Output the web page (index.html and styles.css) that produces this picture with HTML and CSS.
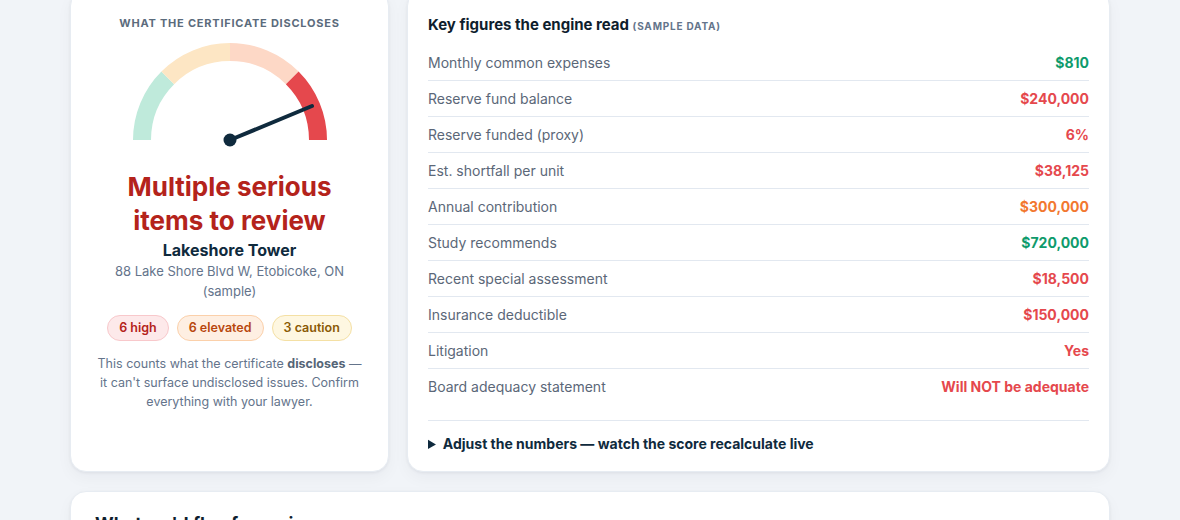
FILE: index.html
```html
<!DOCTYPE html>
<html>
<head>
<title>Status certificate review</title>
<link rel="stylesheet" href="styles.css">
</head>
<body>
<div class="page">
  <div class="summary-grid">
    <div class="card score-card">
      <div class="eyebrow">What the certificate discloses</div>
      <svg class="gauge" width="200" height="105" viewBox="0 0 200 105">
        <path d="M12 97 A88 88 0 0 1 37.77 34.77" stroke="#bfeadb" />
        <path d="M37.77 34.77 A88 88 0 0 1 100 9" stroke="#fde6c4" />
        <path d="M100 9 A88 88 0 0 1 162.23 34.77" stroke="#fdd8c6" />
        <path d="M162.23 34.77 A88 88 0 0 1 188 97" stroke="#e5484d" />
        <line x1="100" y1="97" x2="182" y2="63" class="needle" />
        <circle cx="100" cy="97" r="6.5" fill="#0f2a3d" />
      </svg>
      <div class="verdict">Multiple serious items to review</div>
      <div class="building">Lakeshore Tower</div>
      <div class="address">88 Lake Shore Blvd W, Etobicoke, ON (sample)</div>
      <div class="chips">
        <span class="chip chip-high">6 high</span>
        <span class="chip chip-elevated">6 elevated</span>
        <span class="chip chip-caution">3 caution</span>
      </div>
      <p class="note">This counts what the certificate <b>discloses</b> — it can't surface undisclosed issues. Confirm everything with your lawyer.</p>
    </div>

    <div class="card figures-card">
      <h3 class="figures-title">Key figures the engine read <span class="tag">(sample data)</span></h3>
      <div class="figures">
        <div class="row"><span>Monthly common expenses</span><b class="good">$810</b></div>
        <div class="row"><span>Reserve fund balance</span><b class="bad">$240,000</b></div>
        <div class="row"><span>Reserve funded (proxy)</span><b class="bad">6%</b></div>
        <div class="row"><span>Est. shortfall per unit</span><b class="bad">$38,125</b></div>
        <div class="row"><span>Annual contribution</span><b class="warn">$300,000</b></div>
        <div class="row"><span>Study recommends</span><b class="good">$720,000</b></div>
        <div class="row"><span>Recent special assessment</span><b class="bad">$18,500</b></div>
        <div class="row"><span>Insurance deductible</span><b class="bad">$150,000</b></div>
        <div class="row"><span>Litigation</span><b class="bad">Yes</b></div>
        <div class="row"><span>Board adequacy statement</span><b class="bad">Will NOT be adequate</b></div>
      </div>
      <details class="adjust">
        <summary>Adjust the numbers — watch the score recalculate live</summary>
      </details>
    </div>
  </div>

  <div class="card flags-card">
    <h2>What we'd flag for review</h2>
  </div>
</div>
</body>
</html>
```

FILE: styles.css
```css
body {
  margin: 0;
  font-family: Inter, "Noto Sans", sans-serif;
  background-color: #f1f4f8;
  color: #0f2a3d;
  overflow: hidden;
}
.page {
  width: 1040px;
  margin: -10px auto 0;
  display: flex;
  flex-direction: column;
  gap: 19px;
}
.summary-grid {
  display: grid;
  grid-template-columns: 319px 703px;
  gap: 18px;
}
.card {
  background-color: white;
  border-radius: 16px;
  border: 1px solid #e7ecf2;
  box-shadow: 0 1px 3px rgba(15, 23, 42, 0.06), 0 6px 16px rgba(15, 23, 42, 0.04);
  box-sizing: border-box;
}
.score-card {
  padding: 25px 24px 20px;
  display: flex;
  flex-direction: column;
  align-items: center;
  text-align: center;
}
.eyebrow {
  font-size: 11px;
  line-height: 14px;
  font-weight: 700;
  letter-spacing: 0.07em;
  text-transform: uppercase;
  color: #5b6b7c;
}
.gauge {
  margin-top: 13px;
  display: block;
}
.gauge path {
  fill: none;
  stroke-width: 18;
}
.needle {
  stroke: #0f2a3d;
  stroke-width: 4;
  stroke-linecap: round;
}
.verdict {
  margin-top: 22px;
  width: 230px;
  font-size: 26px;
  line-height: 34px;
  font-weight: 700;
  color: #b4231b;
}
.building {
  margin-top: 2px;
  font-size: 16px;
  line-height: 20px;
  font-weight: 700;
  color: #0f2a3d;
}
.address {
  margin-top: 1px;
  width: 250px;
  font-size: 13px;
  line-height: 20px;
  color: #64748b;
}
.chips {
  margin-top: 14px;
  display: flex;
  gap: 8px;
}
.chip {
  height: 26px;
  line-height: 24px;
  box-sizing: border-box;
  padding: 0 11px;
  border-radius: 13px;
  font-size: 12.5px;
  font-weight: 600;
  border: 1px solid;
}
.chip-high {
  background-color: #fde9ea;
  border-color: #f8c8cb;
  color: #b4231b;
}
.chip-elevated {
  background-color: #feefe2;
  border-color: #fbd0aa;
  color: #b8470d;
}
.chip-caution {
  background-color: #fef7e1;
  border-color: #f4e0a4;
  color: #8a5a05;
}
.note {
  margin: 13px 0 0;
  font-size: 12.5px;
  line-height: 19px;
  color: #64748b;
}
.note b {
  font-weight: 700;
  color: #556577;
}
.figures-card {
  padding: 24px 20px 17px;
}
.figures-title {
  margin: 0;
  font-size: 15px;
  line-height: 20px;
  font-weight: 700;
  color: #0f1e2d;
}
.tag {
  font-size: 10px;
  font-weight: 700;
  letter-spacing: 0.08em;
  text-transform: uppercase;
  color: #64748b;
}
.figures {
  margin-top: 9px;
}
.row {
  height: 35px;
  display: flex;
  align-items: center;
  justify-content: space-between;
  border-bottom: 1px solid #e2e8f0;
  font-size: 14px;
  color: #5b6778;
}
.row:last-child {
  border-bottom: none;
}
.row b {
  font-weight: 700;
}
.good { color: #0f9b6c; }
.bad { color: #e5484d; }
.warn { color: #f2782f; }
.adjust {
  margin-top: 16px;
  border-top: 1px solid #e2e8f0;
  padding-top: 13px;
}
.adjust summary {
  font-size: 14px;
  line-height: 20px;
  font-weight: 700;
  color: #0f2a3d;
  cursor: pointer;
}
.flags-card {
  padding: 20px 24px;
  height: 200px;
}
.flags-card h2 {
  margin: 0;
  font-size: 18px;
  line-height: 24px;
  font-weight: 700;
  color: #0f1e2d;
}
```
